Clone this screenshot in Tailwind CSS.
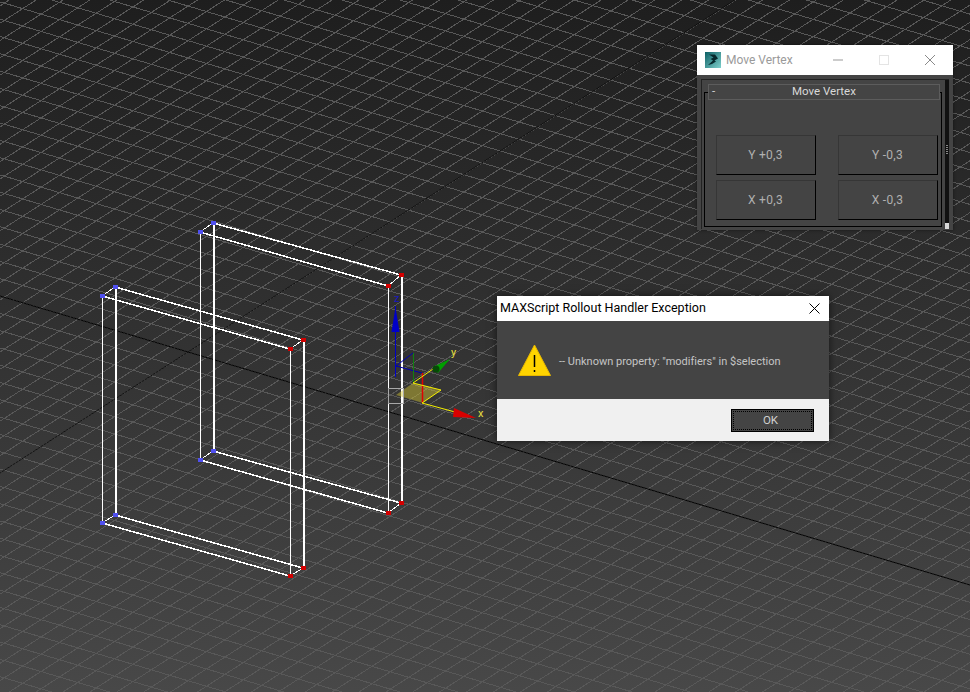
<!DOCTYPE html>
<html lang="en">
<head>
<meta charset="UTF-8">
<title>Move Vertex</title>
<script src="https://cdn.jsdelivr.net/npm/@tailwindcss/browser@4"></script>
</head>
<body class="bg-[#2f2f2f] overflow-hidden">
<div class="relative w-[970px] h-[692px] overflow-hidden font-['Roboto',sans-serif] bg-gradient-to-b from-[#1e1e1e] to-[#484848]">

  <!-- viewport -->
  <svg class="absolute inset-0" width="970" height="692" viewBox="0 0 970 692">
    <g id="grid" stroke="#585858" stroke-width="1" shape-rendering="crispEdges"></g>
    <line x1="0" y1="296" x2="970" y2="585" stroke="#000" />
    <line x1="0" y1="473" x2="735" y2="0" stroke="#000" stroke-opacity="0.8" />

    <!-- back box -->
    <g fill="none" stroke="#fff" shape-rendering="crispEdges">
      <path stroke-width="1.500" d="M213 223L401 275M200 232L388 286M213 451L401 503M200 460L388 513" />
      <path stroke-width="1" d="M200 232L213 223M388 286L401 275M200 460L213 451M388 513L401 503" />
      <path stroke-width="2" d="M214 223V451M402 275V503" />
      <path stroke-width="1" d="M200.500 232V460M388.500 286V513" />
      <!-- front box -->
      <path stroke-width="1.500" d="M115 287L303 340M102 296L290 349M115 515L303 568M102 523L290 576" />
      <path stroke-width="1" d="M102 296L115 287M290 349L303 340M102 523L115 515M290 576L303 568" />
      <path stroke-width="2" d="M116 287V515M304 340V568" />
      <path stroke-width="1" d="M102.500 296V523M290.500 349V576" />
    </g>
    <g fill="#5050f0">
      <rect x="198" y="230" width="5" height="4" /><rect x="211" y="221" width="5" height="4" />
      <rect x="198" y="458" width="5" height="4" /><rect x="211" y="449" width="5" height="4" />
      <rect x="100" y="294" width="5" height="4" /><rect x="113" y="285" width="5" height="4" />
      <rect x="100" y="521" width="5" height="4" /><rect x="113" y="513" width="5" height="4" />
    </g>
    <g fill="#d40000">
      <rect x="386" y="284" width="5" height="4" /><rect x="399" y="273" width="5" height="4" />
      <rect x="386" y="511" width="5" height="4" /><rect x="399" y="501" width="5" height="4" />
      <rect x="288" y="347" width="5" height="4" /><rect x="301" y="338" width="5" height="4" />
      <rect x="288" y="574" width="5" height="4" /><rect x="301" y="566" width="5" height="4" />
    </g>

    <!-- move gizmo -->
    <path d="M413 383L441 390L423 403L396 395Z" fill="#d8c830" fill-opacity="0.45" />
    <rect x="388.500" y="388.500" width="15" height="15" fill="none" stroke="#a8a8a8" />
    <path d="M395.500 306V377" stroke="#0000c8" fill="none" />
    <path d="M396 366L413 353M396 366L422 373" stroke="#0000b0" fill="none" />
    <path d="M413.500 353V383" stroke="#108010" fill="none" />
    <path d="M422.500 373V403" stroke="#e00000" stroke-width="1.500" fill="none" />
    <path d="M413 383L441 390L422 403L455 412M413 383L433 369" stroke="#f5f000" fill="none" />
    <path d="M395.500 307L399.500 332H391.500Z" fill="#0000c8" />
    <path d="M450 359L438 373L433 367Z" fill="#00a000" />
    <circle cx="436" cy="369" r="3.500" fill="#064a06" />
    <path d="M476 418L453 417L454 408Z" fill="#d80000" />
    <text x="394" y="302" fill="#1818c0" font-size="11">z</text>
    <text x="451" y="356" fill="#e8e040" font-size="11">y</text>
    <text x="478" y="417" fill="#e8e040" font-size="11">x</text>
  </svg>

  <!-- Move Vertex window -->
  <div class="absolute left-[697px] top-[45px] w-[256px] h-[185px] flex flex-col bg-[#444444] shadow-[0_0_3px_rgba(0,0,0,0.5)]">
    <div class="h-[30px] shrink-0 bg-white flex items-center">
      <svg class="ml-[8px]" width="16" height="16" viewBox="0 0 16 16">
        <defs>
          <linearGradient id="maxicon" x1="0" y1="0" x2="1" y2="1">
            <stop offset="0" stop-color="#0c5f64" />
            <stop offset="1" stop-color="#7fd0cc" />
          </linearGradient>
        </defs>
        <rect width="16" height="16" fill="url(#maxicon)" />
        <path d="M4 2.500H10L13 6.500L9.500 8.500L11 9.500L7 12L3 13L8 8.500L5.500 7L8.500 5.500Z" fill="#06282c" />
      </svg>
      <span class="ml-[5px] text-[12px] text-[#9a9a9a]">Move Vertex</span>
      <div class="ml-auto flex items-center">
        <svg width="46" height="30" viewBox="0 0 46 30"><path d="M18 15H28" stroke="#999999" /></svg>
        <svg width="46" height="30" viewBox="0 0 46 30"><rect x="18.500" y="10.500" width="9" height="9" fill="none" stroke="#e4e4e4" /></svg>
        <svg width="46" height="30" viewBox="0 0 46 30"><path d="M18 10L28 20M28 10L18 20" stroke="#8a8a8a" fill="none" /></svg>
      </div>
    </div>
    <div class="relative flex-1 mx-[4px] mt-[4px] mb-px border-t border-l border-[#222222] flex">
      <div class="relative flex-1 mt-[12px] ml-[2px] mb-[2px] border border-black">
        <div class="absolute -top-[9px] left-[3px] right-px h-[16px] border border-[#5c5c5c] bg-[#444444] flex items-center text-[11.500px] text-[#d8d8d8]">
          <span class="absolute left-[3px] leading-none">-</span>
          <span class="flex-1 text-center leading-none">Move Vertex</span>
        </div>
        <div class="grid grid-cols-[100px_100px] justify-between gap-y-[5px] pt-[42px] pl-[11px] pr-[3px]">
          <button class="h-[40px] pr-px border border-[#363636] border-r-black border-b-black text-[12px] tracking-[0.3px] text-[#b0b0b0]">Y +0,3</button>
          <button class="h-[40px] pr-px border border-[#363636] border-r-black border-b-black text-[12px] tracking-[0.3px] text-[#b0b0b0]">Y -0,3</button>
          <button class="h-[40px] pr-px border border-[#363636] border-r-black border-b-black text-[12px] tracking-[0.3px] text-[#b0b0b0]">X +0,3</button>
          <button class="h-[40px] pr-px border border-[#363636] border-r-black border-b-black text-[12px] tracking-[0.3px] text-[#b0b0b0]">X -0,3</button>
        </div>
      </div>
      <div class="relative w-[4px] ml-[3px] bg-[#111111]">
        <div class="absolute left-px top-[65px] w-[2px] h-[10px] bg-[repeating-linear-gradient(#888888_0_1px,transparent_1px_2px)]"></div>
        <div class="absolute left-0 bottom-0 w-[4px] h-[6px] bg-[#d8d8d8]"></div>
      </div>
    </div>
  </div>

  <!-- exception dialog -->
  <div class="absolute left-[497px] top-[296px] w-[332px] h-[145px] flex flex-col shadow-[0_0_8px_rgba(0,0,0,0.6)]">
    <div class="h-[25px] bg-white flex items-center pl-[3px] pb-px text-[12.500px] text-black">
      <span>MAXScript Rollout Handler Exception</span>
      <svg class="ml-auto mr-[9px]" width="11" height="11" viewBox="0 0 11 11"><path d="M0.500 0.500L10.500 10.500M10.500 0.500L0.500 10.500" stroke="#000" fill="none" /></svg>
    </div>
    <div class="h-[78px] bg-[#444444] flex items-center pl-[21px]">
      <svg width="33" height="32" viewBox="0 0 33 32">
        <path d="M16.500 1L32.500 31.500H0.500Z" fill="#ffd400" stroke="#e8b800" />
        <path d="M16.500 11V23M16.500 26V28" stroke="#000" stroke-width="1.500" />
      </svg>
      <span class="ml-[8px] mt-[4px] text-[11px] text-[#c4c4c4] [font-variant-ligatures:none]">-- Unknown property: "modifiers" in $selection</span>
    </div>
    <div class="flex-1 bg-[#f0f0f0] flex items-start justify-end pt-[10px] pr-[15px]">
      <button class="w-[83px] h-[23px] pr-[4px] bg-[#444444] border border-black outline outline-1 outline-dotted -outline-offset-3 outline-black text-[11.500px] text-[#d0d0d0]">OK</button>
    </div>
  </div>
</div>
<script>
  // both families are kept in phase with the two black axis lines
  var grid = document.getElementById('grid');
  function addLine(x1, y1, x2, y2) {
    var l = document.createElementNS('http://www.w3.org/2000/svg', 'line');
    l.setAttribute('x1', x1); l.setAttribute('y1', y1);
    l.setAttribute('x2', x2); l.setAttribute('y2', y2);
    grid.appendChild(l);
  }
  for (var k = -40; k < 40; k++) addLine(0, 296 + k * 17.3, 970, 296 + k * 17.3 + 970 * 0.298);
  for (var m = -40; m < 60; m++) addLine(0, 473 + m * 17.3, 970, 473 + m * 17.3 - 970 * 0.643);
</script>
</body>
</html>
